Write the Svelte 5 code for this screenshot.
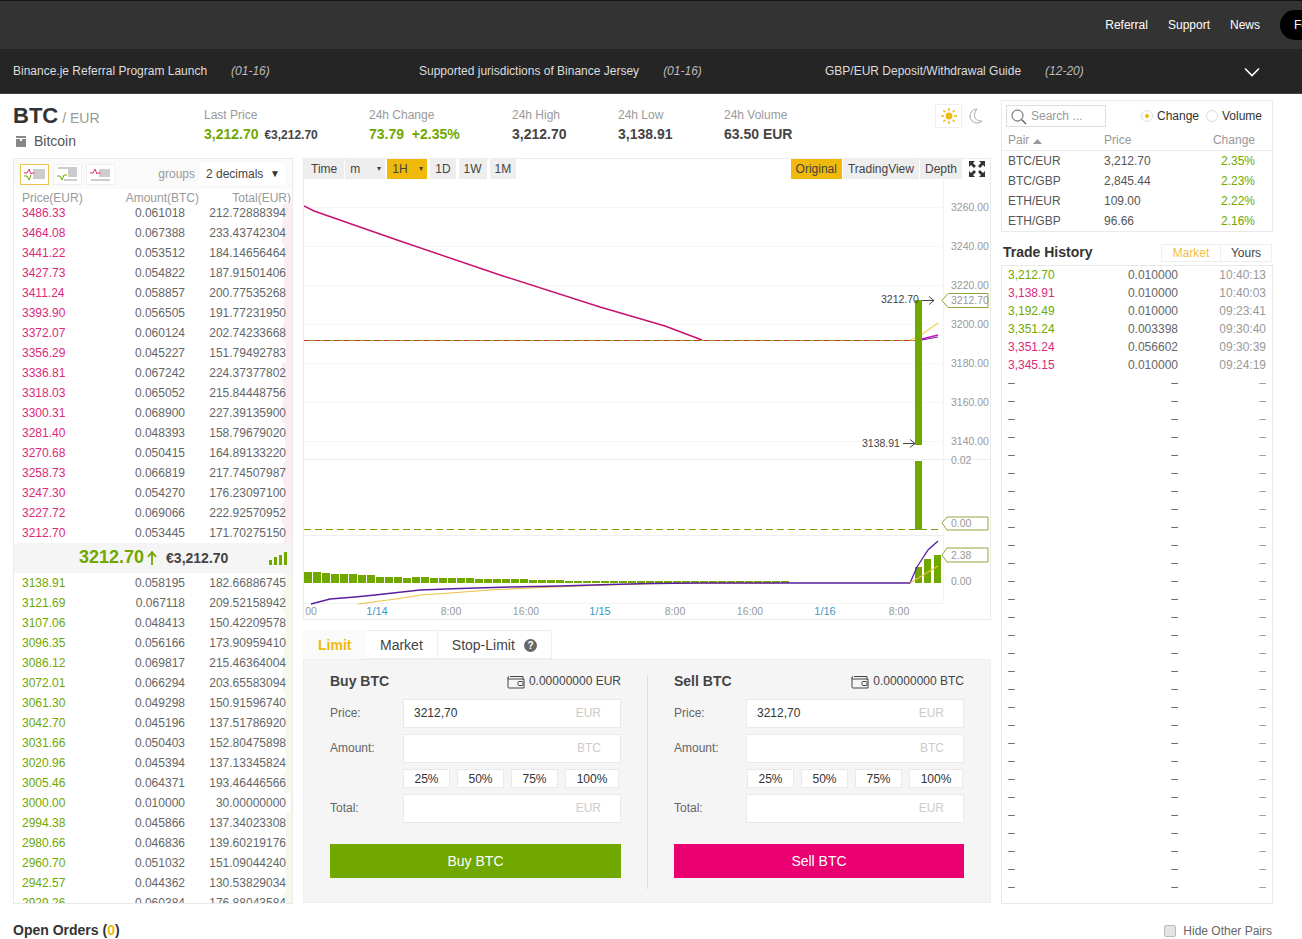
<script>
  const sells = [
    ['3486.33','0.061018','212.72888394',9],['3464.08','0.067388','233.43742304',10],['3441.22','0.053512','184.14656464',8],
    ['3427.73','0.054822','187.91501406',8],['3411.24','0.058857','200.77535268',8],['3393.90','0.056505','191.77231950',8],
    ['3372.07','0.060124','202.74233668',9],['3356.29','0.045227','151.79492783',6],['3336.81','0.067242','224.37377802',10],
    ['3318.03','0.065052','215.84448756',9],['3300.31','0.068900','227.39135900',10],['3281.40','0.048393','158.79679020',7],
    ['3270.68','0.050415','164.89133220',7],['3258.73','0.066819','217.74507987',9],['3247.30','0.054270','176.23097100',8],
    ['3227.72','0.069066','222.92570952',10],['3212.70','0.053445','171.70275150',8]
  ];
  const buys = [
    ['3138.91','0.058195','182.66886745',8],['3121.69','0.067118','209.52158942',9],['3107.06','0.048413','150.42209578',6],
    ['3096.35','0.056166','173.90959410',8],['3086.12','0.069817','215.46364004',9],['3072.01','0.066294','203.65583094',9],
    ['3061.30','0.049298','150.91596740',6],['3042.70','0.045196','137.51786920',6],['3031.66','0.050403','152.80475898',7],
    ['3020.96','0.045394','137.13345824',6],['3005.46','0.064371','193.46446566',8],['3000.00','0.010000','30.00000000',2],
    ['2994.38','0.045866','137.34023308',6],['2980.66','0.046836','139.60219176',6],['2960.70','0.051032','151.09044240',7],
    ['2942.57','0.044362','130.53829034',6],['2929.26','0.060384','176.88043584',8]
  ];
  const stats = [
    { label: '24h Change', value: '73.79  +2.35%', cls: 'up', w: 143 },
    { label: '24h High', value: '3,212.70', cls: '', w: 106 },
    { label: '24h Low', value: '3,138.91', cls: '', w: 106 },
    { label: '24h Volume', value: '63.50 EUR', cls: '', w: 100 }
  ];
  const pairs = [
    ['BTC/EUR','3,212.70','2.35%'],['BTC/GBP','2,845.44','2.23%'],['ETH/EUR','109.00','2.22%'],['ETH/GBP','96.66','2.16%']
  ];
  const trades = [
    ['3,212.70','0.010000','10:40:13','up'],['3,138.91','0.010000','10:40:03','down'],['3,192.49','0.010000','09:23:41','up'],
    ['3,351.24','0.003398','09:30:40','up'],['3,351.24','0.056602','09:30:39','down'],['3,345.15','0.010000','09:24:19','down']
  ];
  const emptyRows = Array.from({ length: 29 });
  const forms = [
    { title: 'Buy BTC', bal: '0.00000000 EUR', price: '3212,70', cls: 'buy' },
    { title: 'Sell BTC', bal: '0.00000000 BTC', price: '3212,70', cls: 'sell' }
  ];
  const grid = [207, 246, 285, 324, 363, 402, 441];
  const axis = ['3260.00','3240.00','3220.00','3200.00','3180.00','3160.00','3140.00'];
  const macd = [11,11,10,9,9,9,8,8,6,6,6,5,6,6,5,5,5,5,5,4,4,4,4,4,4,3,3,3,3,2,2,2,2,2,2,2,2,2,2,2,2,2,2,2,2,2,2,2,2,2,2,2,2,2];
  const xLabels = [['00',311,0],['1/14',377,1],['8:00',451,0],['16:00',526,0],['1/15',600,1],['8:00',675,0],['16:00',750,0],['1/16',825,1],['8:00',899,0]];
</script>

<div class="page">
  <header class="nav">
    <a href="#a">Referral</a><a href="#a">Support</a><a href="#a">News</a>
    <span class="pill">Fees</span>
  </header>
  <div class="notice">
    <div class="note n1"><span>Binance.je Referral Program Launch</span><i>(01-16)</i></div>
    <div class="note n2"><span>Supported jurisdictions of Binance Jersey</span><i>(01-16)</i></div>
    <div class="note n3"><span>GBP/EUR Deposit/Withdrawal Guide</span><i>(12-20)</i></div>
    <svg class="chev" width="16" height="10" viewBox="0 0 16 10"><path d="M1 1.500l7 7 7-7" fill="none" stroke="#fff" stroke-width="1.600"/></svg>
  </div>

  <main class="main">
    <div class="leftcenter">
      <section class="summary">
        <div class="coin">
          <div class="sym"><b>BTC</b><span>/ EUR</span></div>
          <div class="cname">
            <svg width="10" height="11" viewBox="0 0 10 11"><path d="M0 0h10v2H0zM0 3h4v8H0zM6 3h4v8H6zM4 5h2v6H4z" fill="#888"/></svg>
            <span>Bitcoin</span>
          </div>
        </div>
        <div class="stat first">
          <div class="lab">Last Price</div>
          <div class="val"><b class="up big">3,212.70</b> <b class="eur">€3,212.70</b></div>
        </div>
        {#each stats as s}
          <div class="stat" style="width:{s.w}px">
            <div class="lab">{s.label}</div>
            <div class="val"><b class={s.cls}>{s.value}</b></div>
          </div>
        {/each}
        <div class="theme">
          <span class="tbtn on">
            <svg width="16" height="16" viewBox="0 0 16 16"><circle cx="8" cy="8" r="3.400" fill="#f0b90b"/><path d="M8 0v3M8 13v3M0 8h3M13 8h3M2.300 2.300l2 2M11.700 11.700l2 2M13.700 2.300l-2 2M4.300 11.700l-2 2" stroke="#f0b90b" stroke-width="1.400"/></svg>
          </span>
          <span class="tbtn">
            <svg width="14" height="16" viewBox="0 0 14 16"><path d="M8 1a7 7 0 0 0 0 14c2 0 3.600-.7 5-2-4.500.4-7.500-2.200-7.500-5.500C5.500 5 6.500 2.800 8 1z" fill="none" stroke="#aaa"/></svg>
          </span>
        </div>
      </section>

      <div class="cols">
        <section class="book">
          <div class="booktools">
            <span class="bk on"><svg width="27" height="19" viewBox="0 0 27 19"><path d="M3 8h3l2-4 2 5 1-1h3" fill="none" stroke="#dc2a7a"/><path d="M3 11h3l2 4 2-5" fill="none" stroke="#70a800"/><path d="M12 5h12M12 7h12M12 9h12M12 11h12M12 13h12" stroke="#999"/></svg></span>
            <span class="bk"><svg width="26" height="19" viewBox="0 0 26 19"><path d="M3 11h3l2 4 2-5h3" fill="none" stroke="#70a800"/><path d="M4 3h19M14 5h9M14 7h9M14 9h9M14 11h9" stroke="#999"/><path d="M10 15h13" stroke="#999"/></svg></span>
            <span class="bk"><svg width="26" height="19" viewBox="0 0 26 19"><path d="M3 8h3l2-4 2 5 1-1h3" fill="none" stroke="#dc2a7a"/><path d="M12 5h11M12 7h11M12 9h11M12 11h11M4 15h19" stroke="#999"/></svg></span>
            <span class="groups">groups</span>
            <span class="select">2 decimals <em>▼</em></span>
          </div>
          <div class="bhead"><span>Price(EUR)</span><span>Amount(BTC)</span><span>Total(EUR)</span></div>
          {#each sells as r}
            <div class="brow"><span class="dbar dpink" style="width:{r[3]}px"></span><span class="down">{r[0]}</span><span>{r[1]}</span><span>{r[2]}</span></div>
          {/each}
          <div class="mid">
            <span class="midp">3212.70</span>
            <svg width="10" height="14" viewBox="0 0 10 14"><path d="M5 14V2M1 6l4-5 4 5" fill="none" stroke="#70a800" stroke-width="1.800"/></svg>
            <b>€3,212.70</b>
            <svg class="bars" width="18" height="13" viewBox="0 0 18 13"><path d="M0 8h3v5H0zM5 5h3v8H5zM10 3h3v10h-3zM15 0h3v13h-3z" fill="#70a800"/></svg>
          </div>
          {#each buys as r}
            <div class="brow"><span class="dbar dgreen" style="width:{r[3]}px"></span><span class="up">{r[0]}</span><span>{r[1]}</span><span>{r[2]}</span></div>
          {/each}
        </section>

        <div class="center">
          <section class="chart">
            <div class="ctools">
              <span class="ct time">Time</span><span class="ct wide">m<small>▾</small></span><span class="ct wide hot sp1">1H<small>▾</small></span><span class="ct sp">1D</span><span class="ct sp">1W</span><span class="ct sp">1M</span>
              <span class="grow"></span>
              <span class="ct hot">Original</span><span class="ct">TradingView</span><span class="ct">Depth</span>
              <span class="ct exp"><svg width="16" height="16" viewBox="0 0 16 16"><path d="M0 0h6L4 2l3 3-2 2-3-3-2 2zM16 0v6l-2-2-3 3-2-2 3-3-2-2zM0 16v-6l2 2 3-3 2 2-3 3 2 2zM16 16h-6l2-2-3-3 2-2 3 3 2-2z" fill="#333"/></svg></span>
            </div>
            <svg class="plot" width="686" height="439" viewBox="304 180 686 439">
              {#each grid as y}<line x1="304" x2="943" y1={y+0.5} y2={y+0.5} stroke="#f6f6f6"/>{/each}
              <line x1="943.500" x2="943.500" y1="180" y2="603" stroke="#f3f3f3"/>
              <line x1="304" x2="990" y1="459.500" y2="459.500" stroke="#eee"/>
              <line x1="304" x2="943" y1="535.500" y2="535.500" stroke="#eee"/>
              <line x1="304" x2="943" y1="603.500" y2="603.500" stroke="#f3f3f3"/>
              {#each axis as t, i}<text x="951" y={grid[i]+4} class="ax">{t}</text>{/each}

              <polyline points="304,206 314,211 400,241 500,275 600,307 665,326 702,340" fill="none" stroke="#c8126e" stroke-width="1.500"/>
              <line x1="304" x2="915" y1="340.500" y2="340.500" stroke="#8cb020"/>
              <line x1="304" x2="915" y1="340.500" y2="340.500" stroke="#c53a3a" stroke-dasharray="6 4"/>
              <polyline points="910,340 921,335 938,323" fill="none" stroke="#f5d04a" stroke-width="1.300"/>
              <polyline points="922,339 938,335" fill="none" stroke="#d010c0" stroke-width="1.300"/>
              <polyline points="922,340 938,337" fill="none" stroke="#6a20a0"/>
              <rect x="915" y="300" width="7" height="145" fill="#70a800"/>
              <text x="881" y="303" class="lb">3212.70</text>
              <path d="M922 300.500h12M929 296.500l5 4-5 4" fill="none" stroke="#444"/>
              <path d="M942 300.500l6-7h40v14h-40z" fill="#fff" stroke="#8ba83a"/>
              <text x="951" y="304" class="ax">3212.70</text>
              <text x="862" y="447" class="lb">3138.91</text>
              <path d="M903 443.500h12M910 439.500l5 4-5 4" fill="none" stroke="#444"/>

              <text x="951" y="464" class="ax">0.02</text>
              <rect x="915" y="461" width="7" height="69" fill="#70a800"/>
              <line x1="304" x2="942" y1="529.500" y2="529.500" stroke="#78a000" stroke-dasharray="7 4"/>
              <path d="M942 523l5-6h41v13h-41z" fill="#fff" stroke="#8ba83a"/>
              <text x="951" y="527" class="ax">0.00</text>

              {#each macd as h, i}<rect x={304+i*9} y={583-h} width="8" height={h} fill="#70a800"/>{/each}
              <polyline points="358,604 380,601 400,598.500 420,595 450,593 490,590 530,588 580,586 640,584 700,583 780,583" fill="none" stroke="#f0c040" stroke-width="1.200"/>
              <rect x="915" y="567" width="7" height="16" fill="#70a800"/>
              <rect x="924" y="559" width="7" height="24" fill="#70a800"/>
              <rect x="934" y="555" width="7" height="28" fill="#70a800"/>
              <polyline points="311,604 330,599 355,597 375,595 420,590 460,588.500 510,587 560,586 610,584.500 650,583.500 700,583 910,583 917,567 928,550 938,541" fill="none" stroke="#5a1fa0" stroke-width="1.300"/>
              <polyline points="910,583 925,574 938,566" fill="none" stroke="#f0c040" stroke-width="1.200"/>
              <path d="M942 555l5-7h41v14h-41z" fill="#fff" stroke="#8ba83a"/>
              <text x="951" y="559" class="ax">2.38</text>
              <text x="951" y="585" class="ax">0.00</text>

              {#each xLabels as l}<text x={l[1]} y="615" text-anchor="middle" class={l[2] ? 'axb' : 'ax'}>{l[0]}</text>{/each}
            </svg>
          </section>

          <div class="tabs">
            <span class="tab on">Limit</span><span class="tab">Market</span>
            <span class="tab">Stop-Limit <svg width="13" height="13" viewBox="0 0 13 13"><circle cx="6.500" cy="6.500" r="6.500" fill="#666"/><text x="6.500" y="10" text-anchor="middle" class="q">?</text></svg></span>
          </div>
          <section class="trade">
            {#each forms as f, i}
              {#if i === 1}<div class="vline"></div>{/if}
              <div class="form">
                <div class="fhead">
                  <b>{f.title}</b>
                  <span class="bal">
                    <svg width="19" height="15" viewBox="0 0 19 15"><path d="M3 2.500h13v3M1 3.500v9.500a1 1 0 0 0 1 1h15v-9H2a1 1 0 0 1-1-1.500c0-.6.4-1 1-1" fill="none" stroke="#444"/><rect x="11" y="7.500" width="5" height="4" rx="1" fill="none" stroke="#444"/></svg>
                    {f.bal}
                  </span>
                </div>
                <div class="line"><span class="fl">Price:</span><div class="inp"><span>{f.price}</span><em>EUR</em></div></div>
                <div class="line"><span class="fl">Amount:</span><div class="inp"><span></span><em>BTC</em></div></div>
                <div class="pcts"><span>25%</span><span>50%</span><span>75%</span><span class="l">100%</span></div>
                <div class="line"><span class="fl">Total:</span><div class="inp"><span></span><em>EUR</em></div></div>
                <div class="submit {f.cls}">{f.title}</div>
              </div>
            {/each}
          </section>
        </div>
      </div>
    </div>

    <aside class="right">
      <section class="pairs">
        <div class="ptop">
          <div class="search">
            <svg width="16" height="16" viewBox="0 0 16 16"><circle cx="6.500" cy="6.500" r="5.500" fill="none" stroke="#555"/><path d="M10.500 10.500l4.500 4.500" stroke="#555" stroke-width="1.200"/></svg>
            <span>Search ...</span>
          </div>
          <span class="radio sel"></span><span class="rl">Change</span>
          <span class="radio"></span><span class="rl">Volume</span>
        </div>
        <div class="phead"><span>Pair <svg width="9" height="5" viewBox="0 0 9 5"><path d="M0 5l4.500-5 4.500 5z" fill="#999"/></svg></span><span>Price</span><span>Change</span></div>
        {#each pairs as p}
          <div class="prow"><span>{p[0]}</span><span>{p[1]}</span><span class="up">{p[2]}</span></div>
        {/each}
      </section>
      <div class="thead">
        <b>Trade History</b>
        <div class="ttabs"><span class="m">Market</span><span>Yours</span></div>
      </div>
      <section class="history">
        {#each trades as t}
          <div class="hrow"><span class={t[3]}>{t[0]}</span><span>{t[1]}</span><span class="tm">{t[2]}</span></div>
        {/each}
        {#each emptyRows as _}
          <div class="hrow"><span>–</span><span>–</span><span class="tm">–</span></div>
        {/each}
      </section>
    </aside>
  </main>

  <footer class="orders">
    <b>Open Orders (<span class="y">0</span>)</b>
    <span class="hide"><span class="check"></span>Hide Other Pairs</span>
  </footer>
</div>

<style>
  :global(html), :global(body) { margin: 0; height: 939px; overflow: hidden; background: #fff; }
  .page { width: 1302px; height: 939px; overflow: hidden; font: 12px/1.2 "Liberation Sans", Arial, sans-serif; color: #333; }
  .nav { height: 48px; border-top: 1px solid #111; background: #333; display: flex; align-items: center; justify-content: flex-end; overflow: hidden; }
  .nav a { color: #fff; text-decoration: none; margin-right: 20px; }
  .pill { flex: none; background: #000; color: #fff; border-radius: 15px 0 0 15px; width: 23px; height: 30px; padding-left: 14px; margin-right: -15px; line-height: 30px; overflow: hidden; white-space: nowrap; }
  .notice { height: 45px; padding-top: 1px; background: #252525; border-bottom: 1px solid #444; box-sizing: border-box; display: flex; align-items: center; color: #ddd; }
  .note { display: flex; gap: 24px; flex: none; }
  .note i { color: #bbb; }
  .n1 { margin-left: 13px; width: 406px; }
  .n2 { width: 406px; }
  .n3 { width: 419px; }
  .chev { margin-left: 0; }

  .main { display: flex; padding: 0 0 0 13px; height: 810px; }
  .leftcenter { width: 978px; flex: none; }
  .summary { height: 64px; display: flex; }
  .coin { width: 191px; padding-top: 9px; }
  .sym b { font-size: 22px; color: #333; line-height: 25px; }
  .sym span { font-size: 14px; color: #999; margin-left: 4px; }
  .cname { display: flex; align-items: center; gap: 8px; margin-top: 5px; margin-left: 3px; font-size: 14px; color: #555; }
  .stat { padding-top: 14px; flex: none; box-sizing: border-box; }
  .stat.first { width: 165px; }
  .lab { color: #999; }
  .val { margin-top: 4px; font-size: 14px; white-space: pre; line-height: 16px; }
  .val b { font-weight: bold; color: #444; }
  .val b.up, .up { color: #70a800; }
  .val b.eur { font-size: 12px; margin-left: 2px; }
  .down { color: #dc2a7a; }
  .theme { display: flex; margin-left: auto; margin-top: 10px; height: 24px; margin-right: 2px; }
  .tbtn { width: 27px; height: 24px; display: flex; align-items: center; justify-content: center; box-sizing: border-box; }
  .tbtn.on { border: 1px solid #eee; }

  .cols { display: flex; gap: 10px; }
  .book { width: 280px; height: 746px; border: 1px solid #eaeaea; box-sizing: border-box; overflow: hidden; flex: none; }
  .booktools { height: 30px; display: flex; align-items: center; padding-left: 6px; background: #fafafa; }
  .bk { width: 29px; height: 21px; box-sizing: border-box; border: 1px solid #f0f0f0; background: #fff; margin-right: 4px; display: block; }
  .bk svg { display: block; }
  .bk.on { border-color: #eac44f; }
  .groups { margin-left: auto; color: #999; margin-right: 4px; }
  .select { width: 86px; height: 22px; background: #fff; line-height: 22px; padding: 0 5px 0 7px; box-sizing: border-box; margin-right: 7px; display: flex; justify-content: space-between; color: #444; }
  .select em { font-style: normal; font-size: 10px; color: #333; }
  .bhead { display: grid; grid-template-columns: 90px 87px 92px; padding-left: 8px; height: 11px; line-height: 13px; color: #999; margin-top: 3px; }
  .bhead span:not(:first-child) { text-align: right; }
  .brow { position: relative; display: grid; grid-template-columns: 90px 73px 101px; padding-left: 8px; height: 20px; line-height: 20px; color: #666; }
  .brow span:nth-child(n+3) { text-align: right; position: relative; }
  .brow span:nth-child(2) { position: relative; }
  .dbar { position: absolute; right: 0; top: 0; bottom: 0; }
  .dpink { background: #fbeef3; }
  .dgreen { background: #f5f9ec; }
  .mid { height: 30px; background: #f5f5f5; display: flex; align-items: center; padding-left: 65px; }
  .midp { color: #70a800; font-size: 18px; font-weight: bold; margin-right: 3px; }
  .mid b { font-size: 14px; color: #444; margin-left: 9px; }
  .bars { margin-left: auto; margin-right: 5px; }

  .center { width: 688px; flex: none; }
  .chart { height: 462px; border: 1px solid #eaeaea; border-top-color: #eee; box-sizing: border-box; overflow: hidden; }
  .ctools { height: 21px; display: flex; gap: 1px; background: #fff; }
  .ct { background: #eee; padding: 0 5px; height: 20px; line-height: 20px; color: #444; display: block; }
  .ct.time { padding: 0 7px; }
  .ct.sp { margin-left: 2px; }
  .ct.sp1 { margin-left: 1px; }
  .ct.wide { width: 30px; position: relative; }
  .ct small { position: absolute; right: 4px; font-size: 8px; }
  .ct.hot { background: #f0b90b; }
  .grow { flex: 1; }
  .ct.exp { background: #fff; padding: 2px 5px 0 2px; margin-left: 4px; height: 18px; line-height: 0; }
  .plot { display: block; }
  .ax { font: 10.500px "Liberation Sans", Arial, sans-serif; fill: #999; }
  .axb { font: 11px "Liberation Sans", Arial, sans-serif; fill: #3b9ac4; }
  .lb { font: 10.500px "Liberation Sans", Arial, sans-serif; fill: #444; }
  .q { font: bold 10px "Liberation Sans", Arial, sans-serif; fill: #fff; }

  .tabs { height: 29px; margin-top: 10px; display: flex; font-size: 14px; }
  .tab { height: 29px; box-sizing: border-box; padding: 2px 14px 0; border: 1px solid #eee; border-left: 0; background: #fff; color: #444; display: flex; align-items: center; gap: 9px; }
  .tab.on { color: #f0b90b; font-weight: bold; width: 63px; padding-left: 15px; border-color: transparent; background: #fafafa; }
  .trade { height: 244px; background: #f5f5f5; border: 1px solid #eee; box-sizing: border-box; display: flex; padding: 13px 26px 0; }
  .form { width: 291px; flex: none; }
  .vline { width: 1px; background: #ddd; height: 213px; margin: 3px 26px 0; flex: none; }
  .vline + .form { width: 290px; }
  .vline + .form .fl { width: 72px; }
  .fhead { display: flex; justify-content: space-between; align-items: center; height: 16px; margin-bottom: 10px; color: #444; }
  .fhead b { font-size: 14px; }
  .bal { display: flex; align-items: center; gap: 3px; }
  .line { display: flex; align-items: center; margin-bottom: 6px; }
  .fl { width: 73px; color: #666; }
  .inp { width: 218px; height: 29px; background: #fff; border: 1px solid #eaeaea; box-sizing: border-box; display: flex; justify-content: space-between; align-items: center; padding: 0 19px 0 10px; }
  .inp em { font-style: normal; color: #ccc; }
  .pcts { display: flex; gap: 7px; margin: 0 0 6px 73px; }
  .pcts span { width: 47px; height: 19px; line-height: 18px; box-sizing: border-box; text-align: center; background: #fff; border: 1px solid #eaeaea; }
  .pcts span.l { width: 54px; }
  .submit { height: 34px; line-height: 34px; margin-top: 21px; text-align: center; color: #fff; font-size: 14px; }
  .buy { background: #70a800; }
  .sell { background: #ea0070; }

  .right { width: 272px; flex: none; margin-left: 10px; padding-top: 6px; }
  .pairs { height: 132px; border: 1px solid #eaeaea; box-sizing: border-box; }
  .ptop { height: 33px; display: flex; align-items: flex-start; padding: 4px 0 0 4px; box-sizing: border-box; }
  .search { width: 100px; height: 22px; border: 1px solid #ddd; box-sizing: border-box; display: flex; align-items: center; gap: 4px; padding: 1px 0 0 4px; color: #999; margin-right: 35px; }
  .radio { width: 12px; height: 12px; border-radius: 50%; border: 1px solid #ddd; box-sizing: border-box; position: relative; margin-top: 5px; }
  .radio.sel::after { content: ""; position: absolute; left: 3px; top: 3px; width: 4px; height: 4px; border-radius: 50%; background: #f0b90b; }
  .rl { margin: 4px 0 0 4px; width: 49px; }
  .phead { display: grid; grid-template-columns: 96px 1fr 1fr; padding: 0 18px 0 6px; height: 16px; line-height: 13px; color: #999; border-bottom: 1px solid #eee; }
  .phead span:last-child { text-align: right; margin-right: -1px; }
  .prow { display: grid; grid-template-columns: 96px 1fr 1fr; padding: 0 32px 0 6px; height: 20px; line-height: 20px; color: #555; }
  .prow span:last-child { text-align: right; margin-right: -15px; }
  .thead { display: flex; justify-content: space-between; align-items: center; height: 33px; box-sizing: border-box; padding-top: 7px; }
  .thead b { font-size: 14px; margin-left: 2px; color: #333; }
  .ttabs { display: flex; border: 1px solid #eee; height: 18px; line-height: 17px; box-sizing: border-box; margin: 2px 1px 0 0; }
  .ttabs span { width: 50px; text-align: center; color: #444; }
  .ttabs .m { width: 58px; color: #f0c040; border-right: 1px solid #eee; }
  .history { height: 639px; border: 1px solid #eaeaea; box-sizing: border-box; overflow: hidden; }
  .hrow { display: grid; grid-template-columns: 100px 1fr 1fr; padding: 0 6px; height: 18px; line-height: 18px; color: #666; }
  .hrow span:nth-child(2) { text-align: right; margin-right: 4px; width: 70px; }
  .hrow span.tm { text-align: right; color: #999; }
  .hrow .up { color: #70a800; }
  .hrow .down { color: #dc2a7a; }

  .orders { display: flex; justify-content: space-between; align-items: center; padding: 18px 30px 0 13px; color: #555; }
  .orders b { font-size: 14px; color: #333; }
  .y { color: #f0b90b; }
  .hide { display: flex; align-items: center; gap: 7px; color: #666; margin-top: 1px; }
  .check { width: 12px; height: 12px; background: #e4e4e4; border: 1px solid #bbb; box-sizing: border-box; border-radius: 2px; }
</style>
